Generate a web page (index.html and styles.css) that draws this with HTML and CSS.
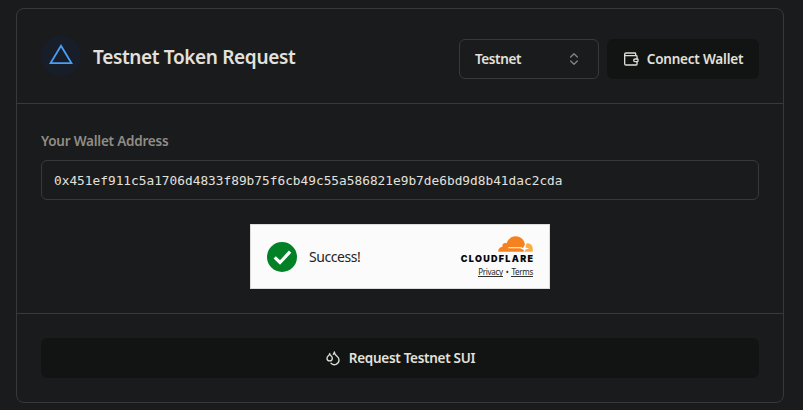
FILE: index.html
```html
<!DOCTYPE html>
<html lang="en">
<head>
<meta charset="utf-8">
<title>Testnet Token Request</title>
<link rel="stylesheet" href="styles.css">
</head>
<body>
<main class="card">
  <header class="card-header">
    <span class="badge">
      <svg width="40" height="40" viewBox="0 0 40 40" fill="none" stroke="#4a9ff5" stroke-width="1.8"><path d="M20 9.8 30.4 27.1H9.6Z"/></svg>
    </span>
    <h1 class="title">Testnet Token Request</h1>
    <button class="select" type="button">
      <span class="select-text">Testnet</span>
      <svg width="16" height="16" viewBox="0 0 24 24" fill="none" stroke="#828481" stroke-width="2" stroke-linecap="round" stroke-linejoin="round"><path d="m7 15 5 5 5-5M7 9l5-5 5 5"/></svg>
    </button>
    <button class="button connect" type="button">
      <svg width="16" height="16" viewBox="0 0 24 24" fill="none" stroke="#dedcd6" stroke-width="2" stroke-linecap="round" stroke-linejoin="round"><path d="M19 7V4a1 1 0 0 0-1-1H4.500a2 2 0 0 0 0 4H20a1 1 0 0 1 1 1v4M2.500 5v14a2 2 0 0 0 2 2H20a1 1 0 0 0 1-1v-4"/><path d="M21.500 12H18a2 2 0 0 0 0 4h3.500a1 1 0 0 0 1-1v-2a1 1 0 0 0-1-1Z"/></svg>
      <span class="connect-text">Connect Wallet</span>
    </button>
  </header>
  <section class="card-body">
    <div class="label"><span>Your Wallet Address</span></div>
    <div class="field">0x451ef911c5a1706d4833f89b75f6cb49c55a586821e9b7de6bd9d8b41dac2cda</div>
    <div class="captcha">
      <svg class="check" width="30" height="30" viewBox="0 0 30 30"><circle cx="15" cy="15" r="15" fill="#038127"/><path d="m7.700 15.300 5.300 5.200L23.100 9.700" fill="none" stroke="#fff" stroke-width="3.200"/></svg>
      <span class="success">Success!</span>
      <div class="brand">
        <svg width="35" height="16" viewBox="0 0 35.600 16"><path fill="#fbad41" d="M26 16 29.300 7.200C34.500 7.200 36 11.200 35.200 16Z"/><path fill="#f6821f" d="M.2 16c-.2-3 1.500-5 4.300-5.200C4 8 6.400 6.200 8.800 7.300 10.200 3 13.800.2 18 .2c4.600 0 8.100 2.900 9.200 7.200.6 3.200-.3 5.700-1.200 8.600Z"/><path fill="#fbfbfb" d="M10.500 11.400h14.200l-.4 1H10.500ZM27 8.700l1.100 2.900 3.600 1-3.600 1L27 16l-1.300-2.500-3-.9 3-.9Z"/></svg>
        <span class="wordmark">CLOUDFLARE</span>
        <span class="links"><a>Privacy</a><i>•</i><a>Terms</a></span>
      </div>
    </div>
  </section>
  <footer class="card-footer">
    <button class="button request" type="button">
      <svg width="16" height="16" viewBox="0 0 24 24" fill="none" stroke="#dedcd6" stroke-width="2" stroke-linecap="round" stroke-linejoin="round"><path d="M7 16.300c2.200 0 4-1.830 4-4.050 0-1.160-.57-2.260-1.710-3.190S7.290 6.750 7 5.300c-.29 1.450-1.140 2.840-2.290 3.760S3 11.100 3 12.250c0 2.220 1.800 4.050 4 4.050z"/><path d="M12.560 6.600A10.970 10.970 0 0 0 14 3.020c.5 2.500 2 4.900 4 6.500s3 3.500 3 5.500a6.980 6.980 0 0 1-11.910 4.970"/></svg>
      <span class="request-text">Request Testnet SUI</span>
    </button>
  </footer>
</main>
</body>
</html>
```
FILE: styles.css
```css
* { box-sizing: border-box; }
body {
  margin: 0;
  padding: 8px 19px 0 16px;
  height: 410px;
  overflow: hidden;
  background: #1a1b1d;
  color: #e3e1dc;
  font-family: "Noto Sans", "Open Sans", sans-serif;
}
button { font: inherit; color: inherit; margin: 0; }
svg { display: block; flex: none; }
.card {
  height: 395px;
  border: 1px solid #37393b;
  border-radius: 8px;
}
.card-header {
  display: flex;
  align-items: center;
  height: 95px;
  padding: 6px 24px 0;
  border-bottom: 1px solid #37393b;
}
.badge {
  width: 40px;
  height: 40px;
  margin-bottom: 6px;
  border-radius: 50%;
  background: #181e29;
}
.title {
  flex: 1;
  margin: 0 0 4px 12px;
  font-size: 19px;
  line-height: 28px;
  font-weight: 600;
  letter-spacing: -0.35px;
  white-space: nowrap;
}
.select {
  display: flex;
  align-items: center;
  justify-content: space-between;
  width: 140px;
  height: 40px;
  margin-right: 8px;
  padding: 0 16px 0 15px;
  border: 1px solid #37393b;
  border-radius: 6px;
  background: transparent;
  font-size: 13.5px;
  font-weight: 600;
  letter-spacing: -0.4px;
}
.button {
  display: flex;
  align-items: center;
  justify-content: center;
  gap: 8px;
  height: 40px;
  padding: 0;
  border: 0;
  border-radius: 6px;
  background: #121413;
  font-size: 13.5px;
  font-weight: 600;
  letter-spacing: -0.3px;
  white-space: nowrap;
}
.connect { width: 152px; letter-spacing: -0.2px; }
.card-body {
  height: 210px;
  padding: 27px 24px 0;
  border-bottom: 1px solid #37393b;
}
.label {
  height: 20px;
  margin-bottom: 9px;
  color: #918d84;
  font-size: 13.5px;
  line-height: 20px;
  font-weight: 600;
  letter-spacing: -0.22px;
}
.field {
  height: 40px;
  padding: 1px 12px 0;
  border: 1px solid #37393b;
  border-radius: 6px;
  font: 12.8px/38px "DejaVu Sans Mono", monospace;
  white-space: nowrap;
}
.captcha {
  display: flex;
  align-items: center;
  width: 300px;
  height: 65px;
  margin: 24px auto 0;
  padding: 0 16px;
  border: 1px solid #dcdcdc;
  background: #fbfbfb;
  color: #252525;
}
.success { flex: 1; margin-left: 12px; font-size: 14px; letter-spacing: -0.45px; }
.brand {
  display: flex;
  flex-direction: column;
  align-items: flex-end;
}
.wordmark {
  margin-top: 2px;
  font: 900 9px/10px Inter, sans-serif;
  letter-spacing: 1.3px;
  margin-right: -1.3px;
  color: #080808;
}
.links {
  display: flex;
  margin-top: 3px;
  font-size: 8px;
  line-height: 9px;
  letter-spacing: -0.3px;
}
.links a { border-bottom: 1px solid #333; }
.links i { margin: 0 3px; font-style: normal; }
.card-footer { padding: 24px; }
.request { width: 100%; }
```
